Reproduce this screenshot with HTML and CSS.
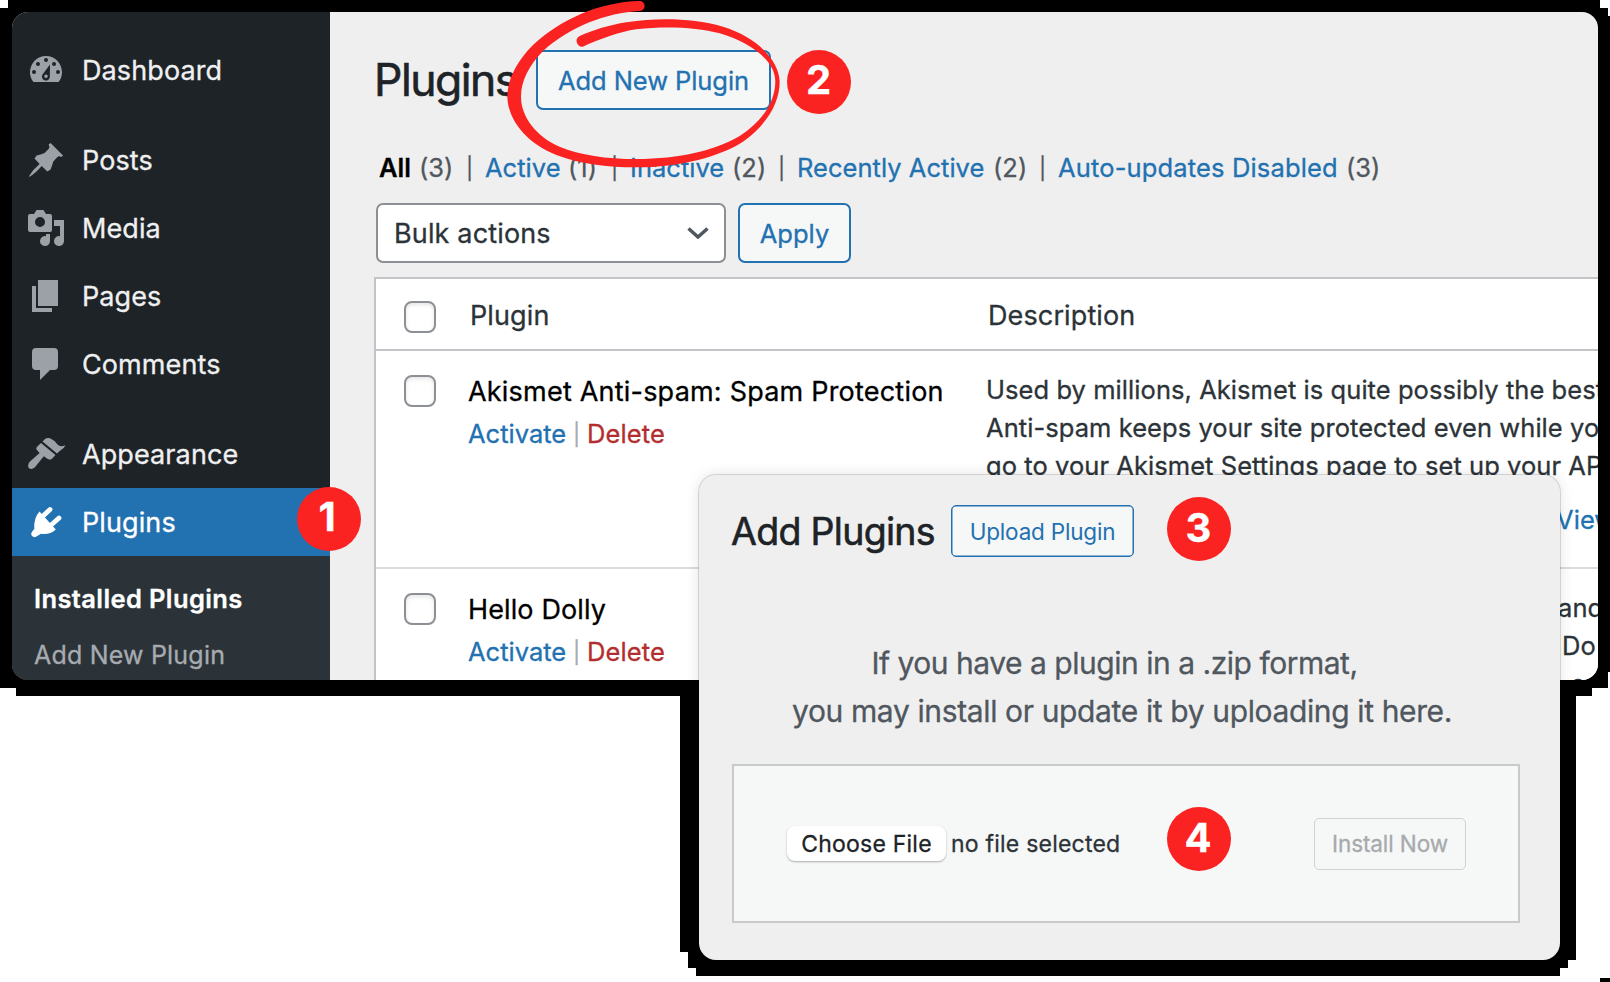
FILE: index.html
```html
<!DOCTYPE html>
<html lang="en">
<head>
<meta charset="utf-8">
<title>Plugins</title>
<link rel="stylesheet" href="styles.css">
</head>
<body>
<svg class="backdrop" viewBox="0 0 1610 982" aria-hidden="true"><path d="M8 0H1600V8H1608V16H1610V672H1608V688H1592V696H1576V960H1568V968H1560V976H696V968H688V952H680V696H16V688H0V8H8ZM1600 978h10v4h-10z"/></svg>

<div class="window">
  <nav class="sidebar">
    <a class="item"><svg class="icon" viewBox="0 0 40 40"><path fill-rule="evenodd" d="M7.500 32C5.300 29.500 4 26 4 22.500C4 13.300 11 6 20 6S36 13.300 36 22.500C36 26 34.700 29.500 32.500 32ZM20 8.100a2 2 0 1 0 0 4 2 2 0 1 0 0-4ZM12 12a2 2 0 1 0 0 4 2 2 0 1 0 0-4ZM28 12a2 2 0 1 0 0 4 2 2 0 1 0 0-4ZM8 20a2 2 0 1 0 0 4 2 2 0 1 0 0-4ZM32 20a2 2 0 1 0 0 4 2 2 0 1 0 0-4ZM24 14.500L16.500 24.500A4 4 0 1 0 23.800 27.500ZM20 24.500a1.800 1.800 0 1 1 0 3.600 1.800 1.800 0 1 1 0-3.600Z"/></svg>Dashboard</a>
    <a class="item gap"><svg class="icon" viewBox="0 0 40 40"><path d="M24.600 3L37 15.400L35.600 17Q33 15.600 31.200 17.200L27.300 21.400Q26.300 25 24.600 29.400L21.300 31.500L15.700 26.100Q9.500 33.500 3.200 37Q3 36.300 3.500 35.500Q7 29.500 13.600 24L8.500 18.600L10.600 15.500Q14.500 14.600 18.600 13L22.800 8.700Q24 7 22.600 4.600Z"/></svg>Posts</a>
    <a class="item"><svg class="icon" viewBox="0 0 40 40"><path fill-rule="evenodd" d="M4 6H8L10.500 2H17.500L20 6H24Q26 6 26 8V22Q26 24 24 24H4Q2 24 2 22V8Q2 6 4 6ZM14 9a5 5 0 1 0 0 10 5 5 0 1 0 0-10Z"/><path d="M28 12H38V33A5 5 0 1 1 34 28.200V18H28ZM20 26H24V33A5 5 0 1 1 20 28.200Z"/></svg>Media</a>
    <a class="item"><svg class="icon" viewBox="0 0 40 40"><path d="M12 4H32V30H12ZM6 10H10V32H26V36H6Z"/></svg>Pages</a>
    <a class="item"><svg class="icon" viewBox="0 0 40 40"><path d="M10 4H28Q32 4 32 8V22Q32 26 28 26H24L14 36V26H10Q6 26 6 22V8Q6 4 10 4Z"/></svg>Comments</a>
    <a class="item gap"><svg class="icon" viewBox="0 0 40 40"><path d="M16.500 7.500L19 5Q21 3.600 24 4.300Q29 6.500 31.500 10.500Q34 13.400 39.500 11.200Q38.500 14 34 16.700L31 19.400Z"/><path d="M15 9L29.500 21L26 24.700Q23.500 26.600 21 24.500L17.800 22.300L8.700 33.600Q5.700 36 3 34.300Q1 31.500 3.700 27.700L13.600 19L10.500 15.400Q9.800 14 10.800 12.900Z"/></svg>Appearance</a>
    <a class="item active"><svg class="icon" viewBox="0 0 40 40"><path d="M13.500 9.500L29.800 27.500Q24 33 15 31.800L10.500 34.500Q8 36 6 34Q4 31.500 7 28.500L8.300 27Q7.500 16 13.500 9.500Z"/><path d="M17.500 13.500L24 7.500M26 22.300L33 16" fill="none" stroke="currentColor" stroke-width="4.800" stroke-linecap="round"/></svg>Plugins</a>
    <div class="submenu"><a class="current">Installed Plugins</a><a class="sub">Add New Plugin</a></div>
  </nav>
  <main class="content">
    <header class="head"><h1 class="title">Plugins</h1><a class="button add">Add New Plugin</a></header>
    <div class="filters">
      <span class="all">All</span><span>(3)</span><i>|</i><a>Active</a><span>(1)</span><i>|</i><a>Inactive</a><span>(2)</span><i>|</i><a>Recently Active</a><span>(2)</span><i>|</i><a class="auto">Auto-updates Disabled</a><span>(3)</span>
    </div>
    <div class="actions">
      <div class="select">Bulk actions<svg class="chevron" viewBox="0 0 22 12"><path d="M1.500 1.500L11 10L20.500 1.500"/></svg></div>
      <a class="button apply">Apply</a>
    </div>
    <div class="table">
      <div class="row thead"><span class="check"></span><span class="th">Plugin</span><span class="th desc-head">Description</span></div>
      <div class="row first">
        <span class="check"></span>
        <div class="info"><div class="name akismet">Akismet Anti-spam: Spam Protection</div><div class="links"><a class="activate">Activate</a><i>|</i><a class="delete">Delete</a></div></div>
        <div class="desc"><p>Used by millions, Akismet is quite possibly the best<br>Anti-spam keeps your site protected even while you<br>go to your Akismet Settings page to set up your API</p><a class="view">View</a></div>
      </div>
      <div class="row second">
        <span class="check"></span>
        <div class="info"><div class="name">Hello Dolly</div><div class="links"><a class="activate">Activate</a><i>|</i><a class="delete">Delete</a></div></div>
        <div class="desc tail"><p>and<br><span class="dolly">Do</span><br><span class="song">s</span></p></div>
      </div>
    </div>
  </main>
</div>

<section class="dialog">
  <header class="dialog-head"><h2 class="dialog-title">Add Plugins</h2><a class="button upload">Upload Plugin</a></header>
  <p class="help"><span class="help-one">If you have a plugin in a .zip format,</span><br><span class="help-two">you may install or update it by uploading it here.</span></p>
  <div class="upload-box"><span class="choose">Choose File</span><span class="nofile">no file selected</span><span class="install">Install Now</span></div>
</section>

<svg class="scribble" viewBox="0 0 840 510"><path d="M840 3C720 5 600 60 520 135C470 185 443 240 443 290C445 360 500 430 590 465C660 492 740 502 830 502C960 502 1080 470 1150 425C1220 375 1260 310 1260 245C1258 180 1190 110 1090 80C1000 55 900 52 800 67C750 75 700 90 660 108A17 17 0 0 0 669 140C720 118 780 95 830 88C920 78 1010 82 1080 100C1180 130 1247 185 1247 245C1246 310 1205 365 1140 408C1070 450 960 477 830 477C740 477 660 465 600 440C530 410 484 350 484 290C484 240 510 195 548 155C630 80 740 38 840 33A15 15 0 0 0 840 3Z" transform="translate(-430)"/></svg>
<span class="badge b1">1</span>
<span class="badge b2">2</span>
<span class="badge b3">3</span>
<span class="badge b4">4</span>
</body>
</html>
```
FILE: styles.css
```css
* { box-sizing: border-box; }
body { margin: 0; position: relative; width: 1610px; height: 982px; overflow: hidden; background: #fff; font-family: Inter, "Liberation Sans", sans-serif; color: #2c3338; white-space: nowrap; -webkit-text-stroke: .3px currentColor; }
h1, h2, p { margin: 0; font-weight: 400; }
i { font-style: normal; }
.backdrop { position: absolute; left: 0; top: 0; width: 1610px; height: 982px; }

.window { position: absolute; left: 12px; top: 12px; width: 1586px; height: 668px; border-radius: 16px; overflow: hidden; background: #efefef; display: flex; }

.sidebar { width: 318px; flex: none; background: #1d2327; padding-top: 24px; display: flex; flex-direction: column; }
.item { height: 68px; flex: none; display: flex; align-items: center; gap: 16px; padding-left: 14px; font-size: 27px; letter-spacing: .1px; color: #f0f0f1; }
.item.gap { margin-top: 22px; }
.item.active { background: #2271b1; color: #fff; }
.icon { width: 40px; height: 40px; fill: #9ca1a7; overflow: visible; }
.active .icon { fill: #fff; }
.submenu { flex: 1; background: #2c3338; padding: 15px 0 0 22px; display: flex; flex-direction: column; font-size: 25px; line-height: 56px; }
.current { color: #fff; font-weight: 600; font-size: 25.500px; letter-spacing: .38px; }
.sub { color: #a7abb0; letter-spacing: .2px; }

.content { flex: 1; min-width: 0; padding-left: 44px; }
.head { display: flex; align-items: flex-start; height: 126px; padding-top: 38px; }
.title { width: 162px; font-size: 44.500px; line-height: 60px; letter-spacing: -1.500px; color: #1d2327; -webkit-text-stroke-width: .6px; }
.button { display: flex; align-items: center; justify-content: center; border: 2px solid #2271b1; border-radius: 7px; background: #f6f7f7; color: #2271b1; font-size: 25.500px; }
.add { width: 235px; height: 60px; letter-spacing: -.08px; }
.filters { display: grid; grid-template-columns: 40px 47px 19px 83px 43px 19px 102px 46px 19px 196px 46px 19px 288px 40px; padding-left: 5px; height: 60px; line-height: 60px; font-size: 25.500px; letter-spacing: .03px; color: #50575e; }
.filters a { color: #2271b1; }
.filters i { font-size: 21.500px; line-height: 61px; }
.filters .auto { letter-spacing: .15px; }
.all { color: #000; font-weight: 600; }
.actions { display: flex; gap: 12px; margin: 5px 0 0 2px; }
.select { width: 350px; height: 60px; border: 2px solid #8c8f94; border-radius: 7px; background: #fff; display: flex; align-items: center; justify-content: space-between; padding: 0 15px 0 16px; font-size: 27px; letter-spacing: .15px; }
.chevron { width: 22px; height: 12px; fill: none; stroke: #50575e; stroke-width: 3.500; }
.apply { width: 113px; height: 60px; }

.table { margin-top: 14px; height: 420px; border: 2px solid #c3c4c7; border-right: 0; background: #fff; }
.row { display: grid; grid-template-columns: 92px 518px 1fr; }
.row .check { width: 32px; height: 32px; margin: 24px 0 0 28px; border: 2px solid #8c8f94; border-radius: 8px; background: #fff; box-shadow: inset 0 2px 4px rgba(0,0,0,.1); }
.thead { height: 72px; border-bottom: 2px solid #c3c4c7; }
.row.thead .check { margin-top: 22px; }
.th { font-size: 27px; line-height: 74px; height: 70px; padding-left: 2px; letter-spacing: .12px; }
.first { height: 218px; border-bottom: 2px solid #dcdcde; }
.info { padding-top: 21px; }
.name { font-size: 27px; line-height: 40px; letter-spacing: .12px; color: #000; }
.akismet { letter-spacing: .21px; }
.links { display: flex; font-size: 25.500px; line-height: 44px; color: #2271b1; }
.activate { width: 105px; }
.links i { width: 14px; font-size: 21.500px; line-height: 45px; color: #a7aaad; }
.delete { color: #b32d2e; letter-spacing: .1px; }
.desc { font-size: 25.500px; line-height: 38px; padding-top: 20px; letter-spacing: .06px; }
.view { display: block; margin: 16px 0 0 570px; color: #2271b1; }
.tail { padding-left: 572px; }
.dolly { padding-left: 4px; }
.song { padding-left: 13px; }

.dialog { position: absolute; left: 699px; top: 475px; width: 861px; height: 485px; border-radius: 17px; background: #efefef; box-shadow: 0 0 0 1px rgba(0,0,0,.13), 0 0 14px rgba(0,0,0,.12); }
.dialog-head { display: flex; padding: 30px 0 0 32px; }
.dialog-title { width: 220px; font-size: 37.500px; line-height: 54px; height: 52px; letter-spacing: -.7px; color: #1d2327; -webkit-text-stroke-width: .6px; }
.upload { width: 183px; height: 52px; border-width: 1px; border-radius: 5px; box-shadow: inset 0 0 0 .5px #2271b1; font-size: 22.500px; letter-spacing: -.2px; -webkit-text-stroke-width: 0; }
.help { margin-top: 82px; text-align: center; font-size: 30px; line-height: 48px; color: #50575e; padding-right: 15px; }
.help-one { letter-spacing: -.48px; padding-right: 15px; }
.help-two { letter-spacing: -.37px; }
.upload-box { margin: 29px 0 0 33px; width: 788px; height: 159px; border: 2px solid #c8c9cb; background: #f6f7f7; display: flex; align-items: center; padding: 0 52px 0 53px; font-size: 23px; letter-spacing: .22px; }
.choose { width: 159px; height: 35px; border-radius: 8px; background: #fff; box-shadow: 0 1px 2px rgba(0,0,0,.3); display: flex; align-items: center; justify-content: center; color: #1d2327; }
.nofile { margin-left: 5px; }
.install { margin-left: auto; width: 152px; height: 52px; border: 1px solid #d0d2d4; border-radius: 5px; display: flex; align-items: center; justify-content: center; color: #a7aaad; font-size: 22.500px; letter-spacing: -.1px; }

.scribble { position: absolute; left: 503.333px; top: 0; width: 280px; height: 170px; fill: #fa2322; }
.badge { position: absolute; width: 64px; height: 64px; border-radius: 50%; background: #fa2322; color: #fff; font-size: 40px; font-weight: 700; line-height: 60px; text-align: center; padding-right: 1px; }
.b1 { left: 297px; top: 487px; padding-right: 4px; line-height: 59px; }
.b2 { left: 787px; top: 50px; }
.b3 { left: 1167px; top: 497px; line-height: 61px; }
.b4 { left: 1167px; top: 807px; padding-right: 2px; line-height: 61px; }
```
